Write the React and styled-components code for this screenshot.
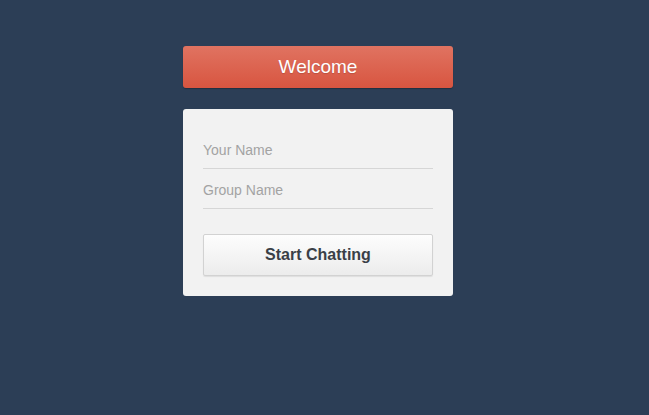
import React from "react";
import styled, { createGlobalStyle } from "styled-components";

const GlobalStyle = createGlobalStyle`
  html, body {
    margin: 0;
    padding: 0;
    height: 100%;
    background: #2c3e56;
    font-family: "Liberation Sans", Arial, sans-serif;
  }
  * {
    box-sizing: border-box;
  }
`;

const Page = styled.div`
  display: flex;
  justify-content: center;
  padding: 46px 13px 0 0;
  min-height: 415px;
`;

const Column = styled.div`
  width: 270px;
  display: flex;
  flex-direction: column;
  gap: 21px;
`;

const Header = styled.div`
  height: 42px;
  border-radius: 3px;
  background: linear-gradient(to bottom, #e07361, #d85540);
  box-shadow: 0 1px 1px rgba(0, 0, 0, 0.25);
  color: #fff;
  font-size: 19px;
  display: flex;
  align-items: center;
  justify-content: center;
  text-shadow: 0 1px 1px rgba(0, 0, 0, 0.15);
`;

const Card = styled.form`
  background: #f2f2f2;
  border-radius: 3px;
  padding: 20px;
  display: flex;
  flex-direction: column;
`;

const Field = styled.input`
  height: 40px;
  border: none;
  border-bottom: 1px solid #d6d6d6;
  background: transparent;
  padding: 3px 0 0;
  font-family: inherit;
  font-size: 14px;
  color: #555;
  outline: none;
  &::placeholder {
    color: #a3a3a3;
  }
`;

const Button = styled.button`
  margin-top: 25px;
  height: 42px;
  border: 1px solid #d2d2d2;
  border-radius: 2px;
  background: linear-gradient(to bottom, #fdfdfd, #ececec);
  box-shadow: 0 1px 1px rgba(0, 0, 0, 0.08);
  font-family: inherit;
  font-size: 16px;
  font-weight: bold;
  color: #3a3f47;
  cursor: pointer;
`;

export default function App() {
  return (
    <>
      <GlobalStyle />
      <Page>
        <Column>
          <Header>Welcome</Header>
          <Card onSubmit={(e) => e.preventDefault()}>
            <Field placeholder="Your Name" />
            <Field placeholder="Group Name" />
            <Button type="submit">Start Chatting</Button>
          </Card>
        </Column>
      </Page>
    </>
  );
}
